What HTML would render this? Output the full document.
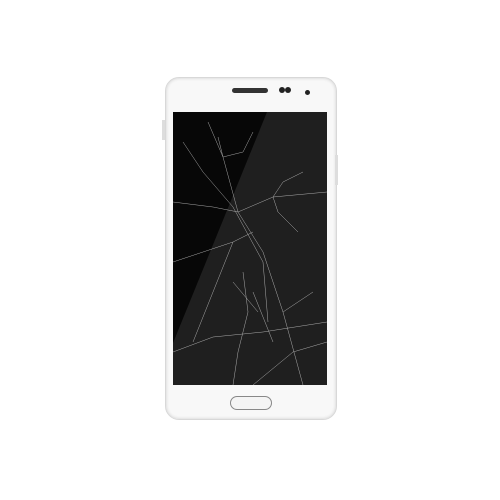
<!DOCTYPE html>
<html><head><style>
body{margin:0;width:500px;height:500px;background:#fff;position:relative;overflow:hidden}
.body{position:absolute;left:165px;top:77px;width:170px;height:341px;border-radius:14px;background:#f8f8f8;border:1px solid #d8d8d8;box-shadow:inset 0 0 3px #ccc}
.scr{position:absolute;left:173px;top:112px;width:154px;height:273px;background:#1f1f1f;overflow:hidden}
</style></head><body>
<div class="body"></div>
<div style="position:absolute;left:162px;top:120px;width:3px;height:20px;background:#ddd"></div>
<div style="position:absolute;left:335px;top:155px;width:3px;height:30px;background:#ddd"></div>
<div style="position:absolute;left:232px;top:88px;width:36px;height:5px;border-radius:3px;background:#333"></div>
<div style="position:absolute;left:279px;top:87px;width:6px;height:6px;border-radius:50%;background:#222"></div>
<div style="position:absolute;left:285px;top:87px;width:6px;height:6px;border-radius:50%;background:#222"></div>
<div style="position:absolute;left:305px;top:90px;width:5px;height:5px;border-radius:50%;background:#222"></div>
<div style="position:absolute;left:230px;top:396px;width:40px;height:12px;border-radius:7px;border:1px solid #888;background:#f4f4f4"></div>
<div class="scr">
<svg width="154" height="273" viewBox="0 0 154 273">
<polygon points="0,0 94,0 0,231" fill="#070707"/>
<g stroke="#cfcfcf" stroke-width="0.5" fill="none" opacity="0.8">
<path d="M35,10 L50,45 L65,100 L90,140 L110,200 L130,273"/>
<path d="M0,90 L40,95 L65,100 L100,85 L154,80"/>
<path d="M10,30 L30,60 L60,95 L90,150 L95,210"/>
<path d="M50,45 L45,25 M50,45 L70,40 L80,20"/>
<path d="M60,130 L40,180 L20,230 M60,130 L80,120"/>
<path d="M0,240 L40,225 L90,220 L154,210"/>
<path d="M154,230 L120,240 L80,273 M110,200 L140,180"/>
<path d="M100,85 L110,70 L130,60 M100,85 L105,100 L125,120"/>
<path d="M70,160 L75,200 L65,240 L60,273"/>
<path d="M0,150 L30,140 L60,130"/>
<path d="M80,180 L100,230 M60,170 L85,200"/>
</g></svg></div>
</body></html>
